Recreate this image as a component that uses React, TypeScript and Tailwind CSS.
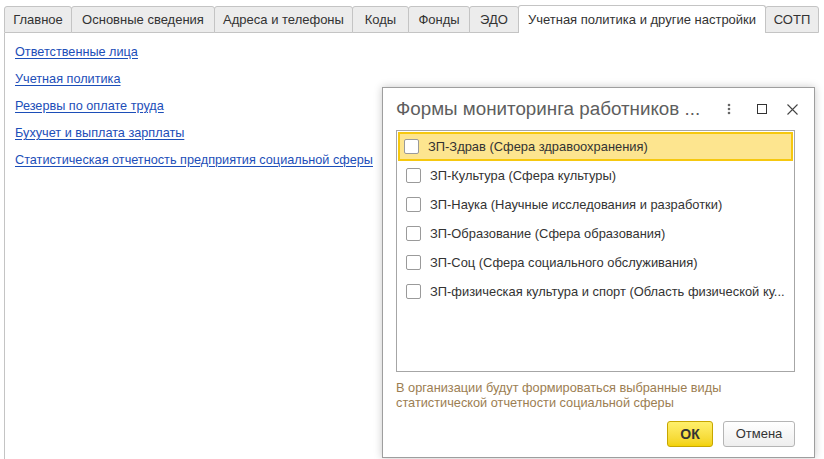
import { useState } from "react"

const tabs = [
  { title: "Главное", w: 68 },
  { title: "Основные сведения", w: 144 },
  { title: "Адреса и телефоны", w: 139 },
  { title: "Коды", w: 57 },
  { title: "Фонды", w: 62 },
  { title: "ЭДО", w: 50 },
  { title: "Учетная политика и другие настройки", w: 248 },
  { title: "СОТП", w: 54 },
]

const links = [
  "Ответственные лица",
  "Учетная политика",
  "Резервы по оплате труда",
  "Бухучет и выплата зарплаты",
  "Статистическая отчетность предприятия социальной сферы",
]

const forms = [
  "ЗП-Здрав (Сфера здравоохранения)",
  "ЗП-Культура (Сфера культуры)",
  "ЗП-Наука (Научные исследования и разработки)",
  "ЗП-Образование (Сфера образования)",
  "ЗП-Соц (Сфера социального обслуживания)",
  "ЗП-физическая культура и спорт (Область физической ку...",
]

export default function App() {
  const [activeTab] = useState(6)
  const [checked, setChecked] = useState<boolean[]>(forms.map(() => false))
  const [current, setCurrent] = useState(0)

  return (
    <div className="relative w-[824px] h-[459px] bg-white overflow-hidden font-['Liberation_Sans',Arial,sans-serif] text-[13px] text-[#333]">
      {/* tabs */}
      <div className="flex items-end h-[33px] pl-[4px] pt-[5px]">
        {tabs.map((t, i) =>
          i === activeTab ? (
            <div
              key={t.title}
              style={{ width: t.w }}
              className="h-[28px] flex items-center justify-center bg-white border border-b-0 border-[#c4c4c4] rounded-t-[3px] -ml-px whitespace-nowrap"
            >
              {t.title}
            </div>
          ) : (
            <div
              key={t.title}
              style={{ width: t.w }}
              className="h-[27px] flex items-center justify-center bg-[#ececec] border border-[#c4c4c4] rounded-t-[3px] -ml-px first:ml-0 whitespace-nowrap"
            >
              {t.title}
            </div>
          ),
        )}
      </div>

      {/* content */}
      <div className="ml-[4px] h-[426px] border-l border-[#c4c4c4] pl-[10px] pt-[10px] flex flex-col">
        {links.map((l) => (
          <a key={l} href="#" className="h-[27px] leading-[19px] text-[12.7px] text-[#1c4eb8] underline underline-offset-2 w-fit">
            {l}
          </a>
        ))}
      </div>

      {/* dialog */}
      <div className="absolute left-[382px] top-[87px] w-[433px] h-[371px] bg-white border border-[#9e9e9e] shadow-[0_0_8px_rgba(0,0,0,0.22)] flex flex-col pl-[13px] pr-[19px]">
        <div className="h-[42px] flex items-center">
          <div className="flex-1 text-[18.8px] text-[#5e5e5e] whitespace-nowrap">Формы мониторинга работников ...</div>
          <div className="flex items-center">
            <svg width="4" height="12" viewBox="0 0 4 12" className="mr-[26px]">
              <circle cx="2" cy="2" r="1.3" fill="#666" />
              <circle cx="2" cy="6" r="1.3" fill="#666" />
              <circle cx="2" cy="10" r="1.3" fill="#666" />
            </svg>
            <svg width="10" height="10" viewBox="0 0 10 10" className="mr-[20px]">
              <rect x="0.5" y="0.5" width="9" height="9" fill="none" stroke="#333" strokeWidth="1" />
            </svg>
            <svg width="11" height="11" viewBox="0 0 11 11" className="-mr-[3px]">
              <path d="M0.5 0.5 L10.5 10.5 M10.5 0.5 L0.5 10.5" stroke="#444" strokeWidth="1.1" />
            </svg>
          </div>
        </div>

        <div className="h-[242px] border border-[#a6a6a6] p-px">
          {forms.map((f, i) => (
            <div
              key={f}
              onClick={() => setCurrent(i)}
              className={
                i === current
                  ? "h-[29px] flex items-center pl-[4px] pr-[4px] bg-[#fde58f] border-2 border-[#f6c80f]"
                  : "h-[29px] flex items-center pl-[6px] pr-[6px] border-2 border-transparent"
              }
            >
              <button
                onClick={() =>
                  setChecked(checked.map((c, j) => (j === i ? !c : c)))
                }
                className="w-[15px] h-[15px] shrink-0 rounded-[2px] border border-[#9a9a9a] bg-white flex items-center justify-center"
              >
                {checked[i] && (
                  <svg width="11" height="9" viewBox="0 0 11 9">
                    <path d="M1 4.5 L4 7.5 L10 1" fill="none" stroke="#333" strokeWidth="1.6" />
                  </svg>
                )}
              </button>
              <span className="ml-[9px] whitespace-nowrap text-[12.9px]">{f}</span>
            </div>
          ))}
        </div>

        <div className="mt-[8px] leading-[15px] text-[12.75px] text-[#9c7e52]">
          В организации будут формироваться выбранные виды
          <br />
          статистической отчетности социальной сферы
        </div>

        <div className="mt-[11px] flex justify-end gap-[10px]">
          <button className="w-[46px] h-[26px] rounded-[3px] border border-[#c7a600] bg-gradient-to-b from-[#fff06a] to-[#f3d200] font-bold text-[#333] text-[14px]">
            ОК
          </button>
          <button className="w-[72px] h-[26px] rounded-[3px] border border-[#b5b5b5] bg-gradient-to-b from-white to-[#eeeeee] text-[#333]">
            Отмена
          </button>
        </div>
      </div>
    </div>
  )
}
